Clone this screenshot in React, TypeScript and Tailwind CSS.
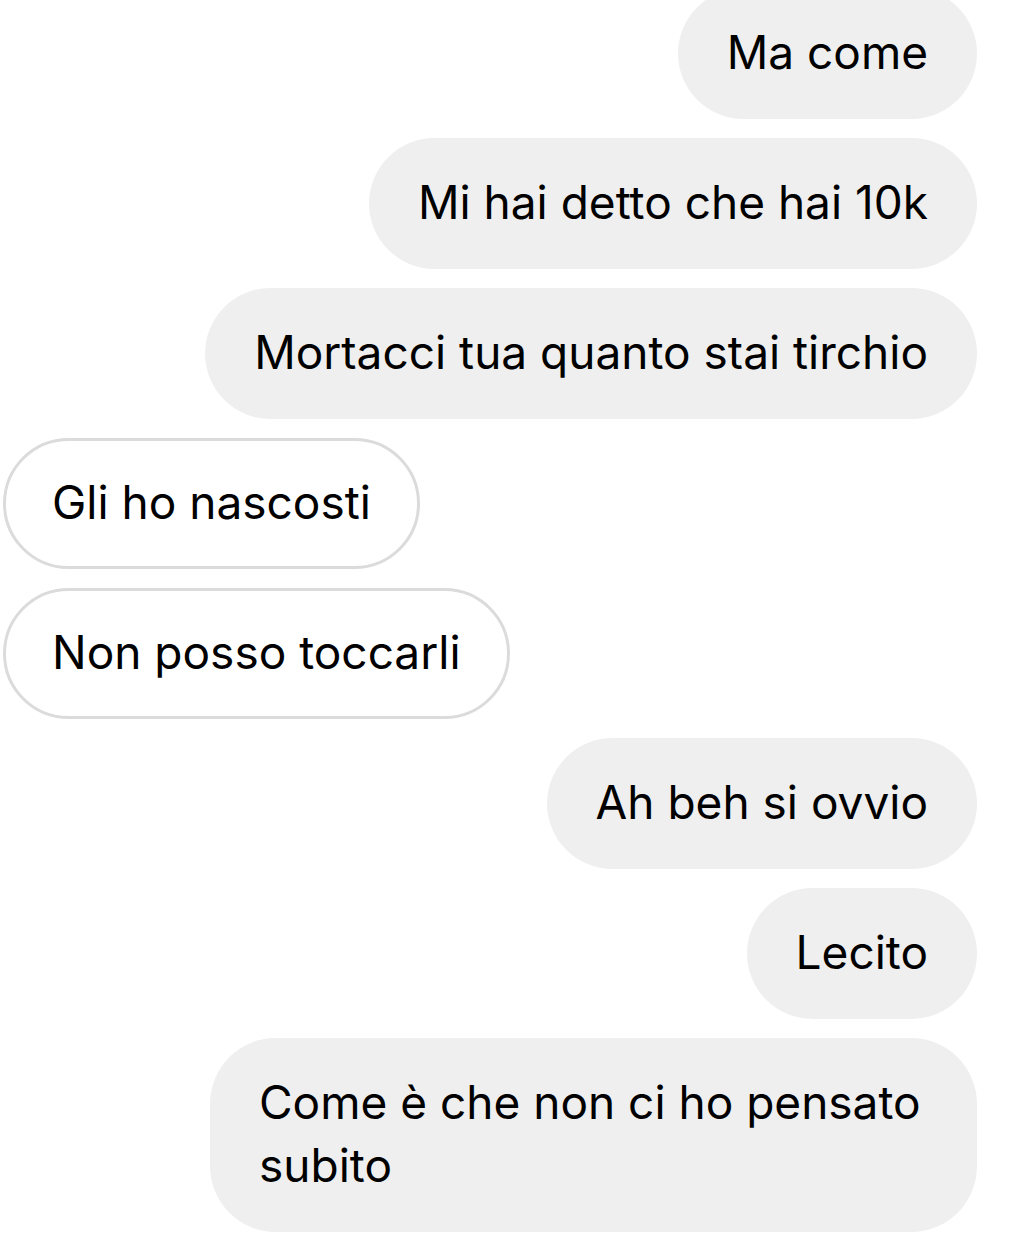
import React from 'react';

type Msg = { text: React.ReactNode; mine: boolean; wide?: boolean };

const messages: Msg[] = [
  { text: 'Ma come', mine: true },
  { text: 'Mi hai detto che hai 10k', mine: true },
  { text: 'Mortacci tua quanto stai tirchio', mine: true },
  { text: 'Gli ho nascosti', mine: false },
  { text: 'Non posso toccarli', mine: false },
  { text: 'Ah beh si ovvio', mine: true },
  { text: 'Lecito', mine: true },
  {
    text: (
      <>
        Come è che non ci ho pensato
        <br />
        subito
      </>
    ),
    mine: true,
    wide: true,
  },
];

export default function App() {
  return (
    <div
      className="w-[1014px] h-[1235px] overflow-hidden bg-white text-black"
      style={{ fontFamily: 'Inter, "Noto Sans", sans-serif' }}
    >
      <div className="flex flex-col gap-[19px] mt-[-12px] pl-[3px] pr-[37px]">
        {messages.map((m, i) => (
          <div key={i} className={m.mine ? 'flex justify-end' : 'flex justify-start'}>
            {m.mine ? (
              <div
                className={
                  'bg-[#efefef] rounded-[66px] pl-[49px] pr-[49px] pt-[33px] pb-[35px] text-[46px] leading-[63px] whitespace-nowrap' +
                  (m.wide ? ' w-[767px] rounded-[62px]' : '')
                }
              >
                {m.text}
              </div>
            ) : (
              <div className="bg-white border-[3px] border-[#dbdbdb] rounded-[66px] pl-[46px] pr-[46px] pt-[30px] pb-[32px] text-[46px] leading-[63px] whitespace-nowrap">
                {m.text}
              </div>
            )}
          </div>
        ))}
      </div>
    </div>
  );
}
